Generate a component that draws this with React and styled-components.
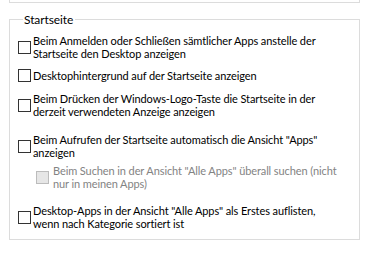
import React from "react";
import styled, { createGlobalStyle } from "styled-components";

const GlobalStyle = createGlobalStyle`
  body {
    margin: 0;
    background: #ffffff;
    font-family: Lato, "Noto Sans", sans-serif;
    font-size: 11px;
    letter-spacing: -0.1px;
    color: #000000;
  }
`;

const options = [
  {
    lines: ["Beim Anmelden oder Schließen sämtlicher Apps anstelle der", "Startseite den Desktop anzeigen"],
    gap: 8,
  },
  { lines: ["Desktophintergrund auf der Startseite anzeigen"], gap: 9 },
  {
    lines: ["Beim Drücken der Windows-Logo-Taste die Startseite in der", "derzeit verwendeten Anzeige anzeigen"],
    gap: 10,
  },
  {
    lines: ["Beim Aufrufen der Startseite automatisch die Ansicht \"Apps\"", "anzeigen"],
    gap: 15,
  },
  {
    lines: ["Beim Suchen in der Ansicht \"Alle Apps\" überall suchen (nicht", "nur in meinen Apps)"],
    gap: 5,
    sub: true,
    disabled: true,
  },
  {
    lines: ["Desktop-Apps in der Ansicht \"Alle Apps\" als Erstes auflisten,", "wenn nach Kategorie sortiert ist"],
    gap: 14,
  },
];

const App = () => {
  return (
    <Page>
      <GlobalStyle />
      <PrevGroup />
      <Group>
        <Legend>Startseite</Legend>
        {options.map((opt, i) => (
          <Option key={i} $gap={opt.gap} $sub={opt.sub}>
            <Box $disabled={opt.disabled} />
            <Label $disabled={opt.disabled} $sub={opt.sub}>
              {opt.lines.map((line, j) => (
                <Line key={j}>{line}</Line>
              ))}
            </Label>
          </Option>
        ))}
      </Group>
    </Page>
  );
};

export default App;

const Page = styled.div`
  width: 369px;
  height: 265px;
  padding-left: 9px;
  box-sizing: border-box;
`;

const PrevGroup = styled.div`
  width: 351px;
  height: 3px;
  box-sizing: border-box;
  border: 1px solid #dcdcdc;
  border-top: none;
`;

const Group = styled.fieldset`
  width: 351px;
  box-sizing: border-box;
  margin: 10px 0 0 0;
  padding: 0 0 9px 8px;
  border: 1px solid #dcdcdc;
  display: flex;
  flex-direction: column;
`;

const Legend = styled.legend`
  margin-left: 5px;
  padding: 0 2px 0 1px;
  line-height: 13px;
  height: 13px;
  font-size: 12px;
`;

const Option = styled.div`
  display: flex;
  align-items: center;
  margin-top: ${(p) => p.$gap}px;
  padding-left: ${(p) => (p.$sub ? 18 : 0)}px;
`;

const Box = styled.div`
  width: 13px;
  height: 13px;
  flex-shrink: 0;
  box-sizing: border-box;
  border: 1px solid ${(p) => (p.$disabled ? "#bcbcbc" : "#333333")};
  background: ${(p) => (p.$disabled ? "#e6e6e6" : "#ffffff")};
`;

const Label = styled.div`
  margin-left: ${(p) => (p.$sub ? 4 : 2)}px;
  color: ${(p) => (p.$disabled ? "#838383" : "#000000")};
`;

const Line = styled.div`
  line-height: 13px;
  height: 13px;
  white-space: nowrap;
`;
